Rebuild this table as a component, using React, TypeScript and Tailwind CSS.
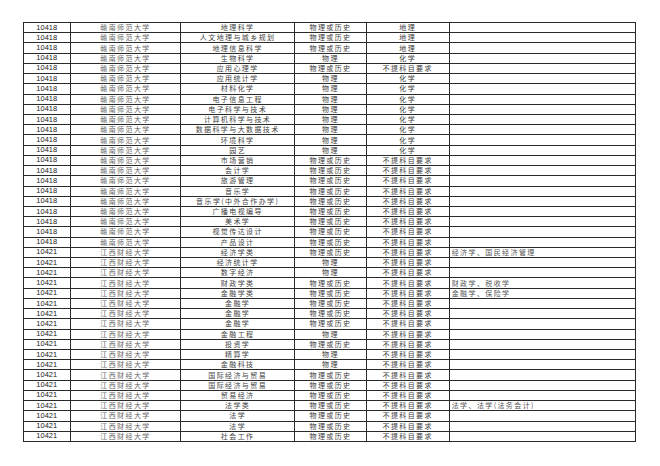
const rows: [string, string, string, string, string, string][] = [
  ["10418", "赣南师范大学", "地理科学", "物理或历史", "地理", ""],
  ["10418", "赣南师范大学", "人文地理与城乡规划", "物理或历史", "地理", ""],
  ["10418", "赣南师范大学", "地理信息科学", "物理或历史", "地理", ""],
  ["10418", "赣南师范大学", "生物科学", "物理", "化学", ""],
  ["10418", "赣南师范大学", "应用心理学", "物理或历史", "不提科目要求", ""],
  ["10418", "赣南师范大学", "应用统计学", "物理", "化学", ""],
  ["10418", "赣南师范大学", "材料化学", "物理", "化学", ""],
  ["10418", "赣南师范大学", "电子信息工程", "物理", "化学", ""],
  ["10418", "赣南师范大学", "电子科学与技术", "物理", "化学", ""],
  ["10418", "赣南师范大学", "计算机科学与技术", "物理", "化学", ""],
  ["10418", "赣南师范大学", "数据科学与大数据技术", "物理", "化学", ""],
  ["10418", "赣南师范大学", "环境科学", "物理", "化学", ""],
  ["10418", "赣南师范大学", "园艺", "物理", "化学", ""],
  ["10418", "赣南师范大学", "市场营销", "物理或历史", "不提科目要求", ""],
  ["10418", "赣南师范大学", "会计学", "物理或历史", "不提科目要求", ""],
  ["10418", "赣南师范大学", "旅游管理", "物理或历史", "不提科目要求", ""],
  ["10418", "赣南师范大学", "音乐学", "物理或历史", "不提科目要求", ""],
  ["10418", "赣南师范大学", "音乐学(中外合作办学)", "物理或历史", "不提科目要求", ""],
  ["10418", "赣南师范大学", "广播电视编导", "物理或历史", "不提科目要求", ""],
  ["10418", "赣南师范大学", "美术学", "物理或历史", "不提科目要求", ""],
  ["10418", "赣南师范大学", "视觉传达设计", "物理或历史", "不提科目要求", ""],
  ["10418", "赣南师范大学", "产品设计", "物理或历史", "不提科目要求", ""],
  ["10421", "江西财经大学", "经济学类", "物理或历史", "不提科目要求", "经济学、国民经济管理"],
  ["10421", "江西财经大学", "经济统计学", "物理", "不提科目要求", ""],
  ["10421", "江西财经大学", "数字经济", "物理", "不提科目要求", ""],
  ["10421", "江西财经大学", "财政学类", "物理或历史", "不提科目要求", "财政学、税收学"],
  ["10421", "江西财经大学", "金融学类", "物理或历史", "不提科目要求", "金融学、保险学"],
  ["10421", "江西财经大学", "金融学", "物理或历史", "不提科目要求", ""],
  ["10421", "江西财经大学", "金融学", "物理或历史", "不提科目要求", ""],
  ["10421", "江西财经大学", "金融学", "物理或历史", "不提科目要求", ""],
  ["10421", "江西财经大学", "金融工程", "物理", "不提科目要求", ""],
  ["10421", "江西财经大学", "投资学", "物理或历史", "不提科目要求", ""],
  ["10421", "江西财经大学", "精算学", "物理", "不提科目要求", ""],
  ["10421", "江西财经大学", "金融科技", "物理", "不提科目要求", ""],
  ["10421", "江西财经大学", "国际经济与贸易", "物理或历史", "不提科目要求", ""],
  ["10421", "江西财经大学", "国际经济与贸易", "物理或历史", "不提科目要求", ""],
  ["10421", "江西财经大学", "贸易经济", "物理或历史", "不提科目要求", ""],
  ["10421", "江西财经大学", "法学类", "物理或历史", "不提科目要求", "法学、法学(法务会计)"],
  ["10421", "江西财经大学", "法学", "物理或历史", "不提科目要求", ""],
  ["10421", "江西财经大学", "法学", "物理或历史", "不提科目要求", ""],
  ["10421", "江西财经大学", "社会工作", "物理或历史", "不提科目要求", ""],
];

// small CJK size keeps each line box inside its 10px row; tracking restores the glyph pitch
const cjk = "font-['Noto_Sans_CJK_SC',sans-serif] text-[7px] tracking-[1.4px] leading-[7px]";
const cell = "shrink-0 border-r border-[#2a2a2a] flex items-center justify-center";

export default function App() {
  return (
    <div className="w-[660px] h-[466px] bg-white pt-[22px] pl-[22.5px]">
      <div className="w-[613.5px] border-t border-l border-[#2a2a2a]">
        {rows.map((r, i) => (
          <div key={i} className="flex h-[10.22px] border-b border-[#2a2a2a]">
            <div className={`w-[47.5px] ${cell} font-['Liberation_Sans',sans-serif] text-[7.5px] leading-[8px] text-[#222]`}>
              {r[0]}
            </div>
            <div className={`w-[110px] ${cell} text-[#666] ${cjk}`}>{r[1]}</div>
            <div className={`w-[114.3px] ${cell} text-[#444] ${cjk}`}>{r[2]}</div>
            <div className={`w-[71.4px] ${cell} text-[#3a3a3a] ${cjk}`}>{r[3]}</div>
            <div className={`w-[83px] ${cell} text-[#3a3a3a] ${cjk}`}>{r[4]}</div>
            <div className={`flex-1 border-r border-[#2a2a2a] flex items-center pl-[2px] text-[#555] ${cjk}`}>
              {r[5]}
            </div>
          </div>
        ))}
      </div>
    </div>
  );
}
